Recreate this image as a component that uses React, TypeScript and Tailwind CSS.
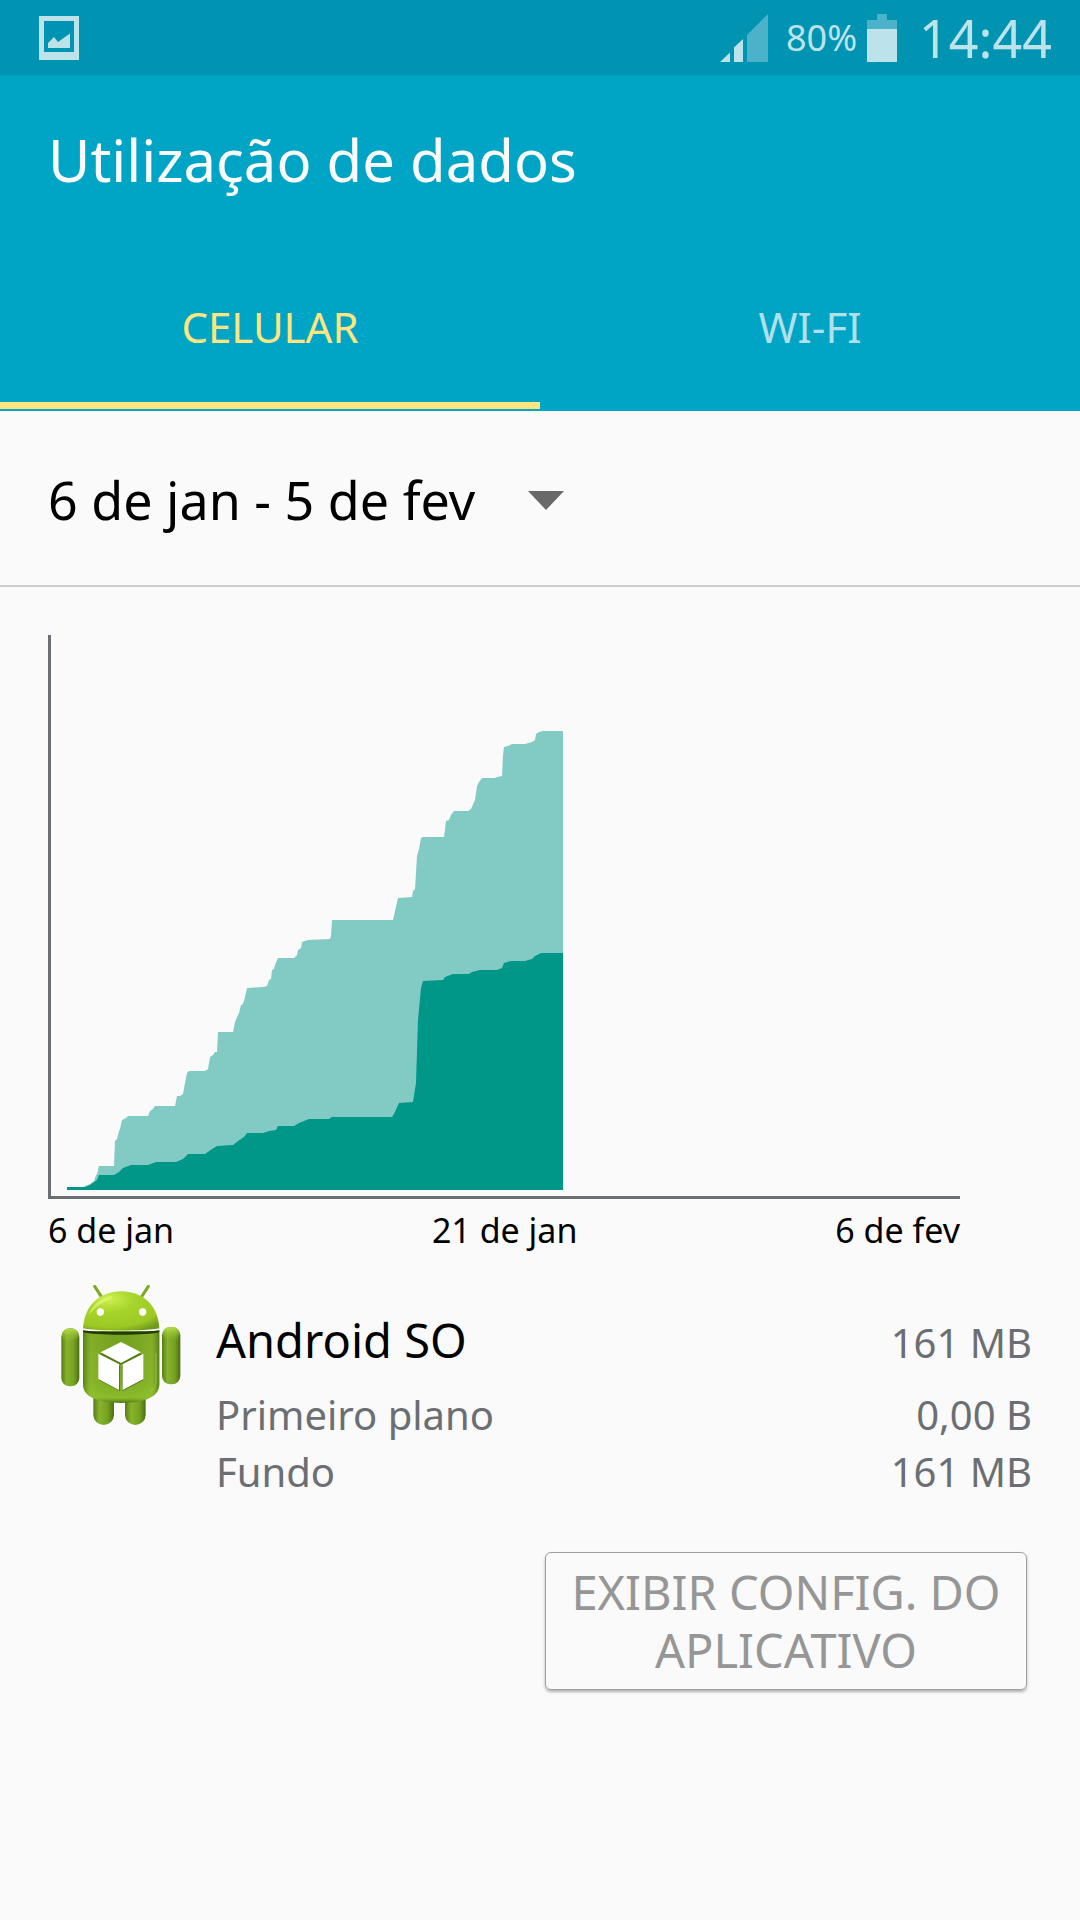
import { useState } from 'react';

const TOTAL_USAGE =
  '19,552 35,552 42,549 46,546 48,540 49,539 51,531 66,531 67,506 69,504 71,496 72,494 74,485 78,483 80,481 100,481 102,476 105,474 107,471 127,471 129,461 132,461 135,459 137,448 139,438 141,436 157,436 160,434 162,422 165,420 167,417 169,417 170,397 185,397 187,387 189,382 191,378 193,370 195,369 197,362 199,353 215,352 219,351 221,345 223,344 224,335 226,334 227,330 230,323 246,323 249,320 250,315 253,313 254,307 257,306 260,305 282,304 283,301 284,285 345,285 347,276 350,263 364,262 365,256 367,254 369,221 371,214 373,203 375,202 396,202 398,186 401,185 403,180 406,176 420,176 423,174 427,165 429,151 431,147 434,143 447,143 449,142 454,141 455,120 456,112 460,111 464,109 477,109 484,107 487,105 488,99 491,97 495,96 515,96';

const APP_USAGE =
  '19,552 37,552 42,550 49,545 51,540 66,540 71,537 75,533 83,530 100,530 108,527 128,527 135,524 140,519 157,519 164,514 169,511 185,510 190,506 196,502 199,498 215,498 221,496 228,495 230,491 246,491 251,488 261,484 281,484 284,482 344,482 346,479 351,468 365,467 368,448 370,385 373,353 375,346 395,345 397,342 405,339 421,339 424,337 432,335 449,335 454,333 456,328 463,326 477,326 484,324 487,321 493,318 515,318';

const usageRows = [
  { label: 'Primeiro plano', value: '0,00 B' },
  { label: 'Fundo', value: '161 MB' },
];

function PictureIcon() {
  return (
    <svg width="40" height="44" viewBox="0 0 40 44" fill="#bce3ea" aria-hidden="true">
      <path fillRule="evenodd" d="M0 0h40v44H0zM5 5v31h30V5z" />
      <path d="M9 32v-5l6-6 4 5 12-8.500v14.500z" />
    </svg>
  );
}

function SignalIcon() {
  return (
    <svg width="48" height="48" viewBox="0 0 48 48" aria-hidden="true">
      <path d="M0 48L10 38.500V48zM14 48V33.500L23 25v23z" fill="#bce3ea" />
      <path d="M27 48V21L48 0v48z" fill="#4bb2c9" />
    </svg>
  );
}

function BatteryIcon() {
  return (
    <svg width="30" height="48" viewBox="0 0 30 48" aria-hidden="true">
      <path d="M10 0h10v6h10v9H0V6h10z" fill="#4bb2c9" />
      <path d="M0 15h30v33H0z" fill="#bce3ea" />
    </svg>
  );
}

function AndroidIcon() {
  return (
    <svg width="120" height="140" viewBox="0 0 360 420" aria-hidden="true">
      <defs>
        <radialGradient id="head" cx="0.35" cy="0.2" r="0.9">
          <stop offset="0" stopColor="#cdf04f" />
          <stop offset="0.35" stopColor="#a8d52b" />
          <stop offset="0.8" stopColor="#9bc823" />
          <stop offset="1" stopColor="#6f9a1c" />
        </radialGradient>
        <linearGradient id="body" x1="0" y1="0" x2="0" y2="1">
          <stop offset="0" stopColor="#74a01f" />
          <stop offset="0.7" stopColor="#7cab23" />
          <stop offset="0.93" stopColor="#8bbb2c" />
          <stop offset="1" stopColor="#4f7512" />
        </linearGradient>
        <linearGradient id="side" x1="0" y1="0" x2="1" y2="0">
          <stop offset="0" stopColor="#365808" stopOpacity="0.5" />
          <stop offset="0.1" stopColor="#9fce3a" stopOpacity="0.3" />
          <stop offset="0.5" stopColor="#7aa823" stopOpacity="0" />
          <stop offset="0.9" stopColor="#9fce3a" stopOpacity="0.3" />
          <stop offset="1" stopColor="#365808" stopOpacity="0.5" />
        </linearGradient>
        <linearGradient id="limb" x1="0" y1="0" x2="1" y2="0">
          <stop offset="0" stopColor="#567d16" />
          <stop offset="0.3" stopColor="#86b42b" />
          <stop offset="0.7" stopColor="#75a122" />
          <stop offset="1" stopColor="#4b6e12" />
        </linearGradient>
        <linearGradient id="cap" x1="0" y1="0" x2="0" y2="1">
          <stop offset="0" stopColor="#b4dc45" />
          <stop offset="1" stopColor="#8fbd2f" stopOpacity="0" />
        </linearGradient>
      </defs>
      {/* antennae */}
      <path d="M101 4l20 31M262 4l-20 31" stroke="#7ea923" strokeWidth="9" strokeLinecap="round" />
      {/* legs and arms */}
      <path d="M97 330h62v60a31 30 0 0 1-62 0z" fill="url(#limb)" />
      <path d="M192 330h62v60a31 30 0 0 1-62 0z" fill="url(#limb)" />
      <rect x="1" y="130" width="54" height="174" rx="25" fill="url(#limb)" />
      <rect x="303" y="126" width="55" height="172" rx="25" fill="url(#limb)" />
      <rect x="3" y="131" width="50" height="40" rx="20" fill="url(#cap)" />
      <rect x="305" y="127" width="51" height="40" rx="20" fill="url(#cap)" />
      {/* torso */}
      <path d="M66 138h229v160c0 34-36 56-114.500 56S66 332 66 298z" fill="url(#body)" />
      <path d="M66 138h229v160c0 34-36 56-114.500 56S66 332 66 298z" fill="url(#side)" />
      <path d="M66 136c30 6 199 6 229 0v5c-30 11-199 11-229 0z" fill="#243a04" />
      <path d="M285 205v84c-2 18-8 25-16 31" stroke="#9cc650" strokeWidth="4" fill="none" opacity="0.6" />
      {/* head */}
      <path d="M66 130C70 60 118 19 181 19s110 41 114 111c-36 9-193 9-229 0z" fill="url(#head)" />
      <path d="M82 92c10-30 32-48 62-58 14-3 12 4 0 10-28 12-44 26-62 48z" fill="#e2fa79" opacity="0.6" />
      <circle cx="118" cy="81" r="11" fill="#fff" />
      <circle cx="245" cy="81" r="11" fill="#fff" />
      {/* package */}
      <path
        d="M180 177l62 31-62 31-63-31zM115 211l62 32v76l-62-33zM246 211l-62 32v76l62-33z"
        fill="#436711"
        opacity="0.7"
      />
      <path d="M180 171l60 31-60 32-61-32zM112 206l62 32v77l-62-33zM247 206l-62 32v77l62-33z" fill="#fff" />
    </svg>
  );
}

function StatusBar() {
  return (
    <div className="flex h-[75px] items-center justify-between bg-[#0093b2] pr-7 pl-[39px] text-[#bce3ea]">
      <PictureIcon />
      <div className="flex items-center">
        <SignalIcon />
        <span className="mr-2.5 ml-[18px] text-[36px] leading-none">80%</span>
        <BatteryIcon />
        <span className="ml-[22px] text-[52px] leading-none">14:44</span>
      </div>
    </div>
  );
}

function UsageChart() {
  return (
    <section className="pt-12 pr-[120px] pl-12">
      <svg className="block h-auto w-full" viewBox="0 0 912 564" role="img" aria-label="Utilização de dados">
        <polygon points={`19,555 ${TOTAL_USAGE} 515,555`} fill="#82cbc4" />
        <polygon points={`19,555 ${APP_USAGE} 515,555`} fill="#009688" />
        <path d="M0 0h3v561h909v3H0z" fill="#6b6e72" />
      </svg>
      <div className="flex justify-between text-[34px] leading-[62px]">
        <span>6 de jan</span>
        <span>21 de jan</span>
        <span>6 de fev</span>
      </div>
    </section>
  );
}

export default function App() {
  const [tab, setTab] = useState('celular');

  const tabs = [
    { id: 'celular', label: 'CELULAR' },
    { id: 'wifi', label: 'WI-FI' },
  ];

  return (
    <div className="min-h-screen bg-[#fafafa] font-['Noto_Sans',sans-serif] text-black">
      <StatusBar />

      <header className="bg-[#00a5c6]">
        <h1 className="flex h-[168px] items-center px-12 text-[58px] text-[#fafafa]">Utilização de dados</h1>
        <div className="flex pb-[2px]" role="tablist">
          {tabs.map((t) => (
            <button
              key={t.id}
              type="button"
              role="tab"
              aria-selected={tab === t.id}
              onClick={() => setTab(t.id)}
              className={`h-[166px] flex-1 border-b-[7px] pt-2 text-[42px] ${
                tab === t.id ? 'border-[#ffe57f] text-[#ffe57f]' : 'border-transparent text-[#b0e0ea]'
              }`}
            >
              {t.label}
            </button>
          ))}
        </div>
      </header>

      <main>
        <div className="flex h-[176px] items-center border-b-2 border-[#cdcdcd] px-12 pt-1">
          <select
            aria-label="Ciclo de dados"
            className="appearance-none bg-transparent text-[52px] outline-none"
            defaultValue="jan"
          >
            <option value="jan">6 de jan - 5 de fev</option>
          </select>
          <svg className="ml-[52px]" width="36" height="19" viewBox="0 0 36 19" aria-hidden="true">
            <path d="M0 0h36L18 19z" fill="#696969" />
          </svg>
        </div>

        <UsageChart />

        <section className="flex px-12 pt-6">
          <div className="ml-[13px] w-[155px] shrink-0">
            <AndroidIcon />
          </div>
          <div className="flex-1 pt-[22px] text-[40px] leading-[57px] text-[#6b6e72]">
            <div className="mb-2.5 flex items-baseline justify-between leading-[66px]">
              <h2 className="text-[47px] text-black">Android SO</h2>
              <span>161 MB</span>
            </div>
            {usageRows.map((row) => (
              <div key={row.label} className="flex justify-between">
                <span>{row.label}</span>
                <span>{row.value}</span>
              </div>
            ))}
          </div>
        </section>

        <div className="flex justify-end px-[53px] pt-[52px]">
          <button
            type="button"
            className="w-[482px] rounded-md border border-[#a0a0a0] py-2.5 text-center text-[47px] leading-[58px] text-[#969696] shadow-[0_2px_3px_rgba(0,0,0,0.3)]"
          >
            EXIBIR CONFIG. DO APLICATIVO
          </button>
        </div>
      </main>
    </div>
  );
}
